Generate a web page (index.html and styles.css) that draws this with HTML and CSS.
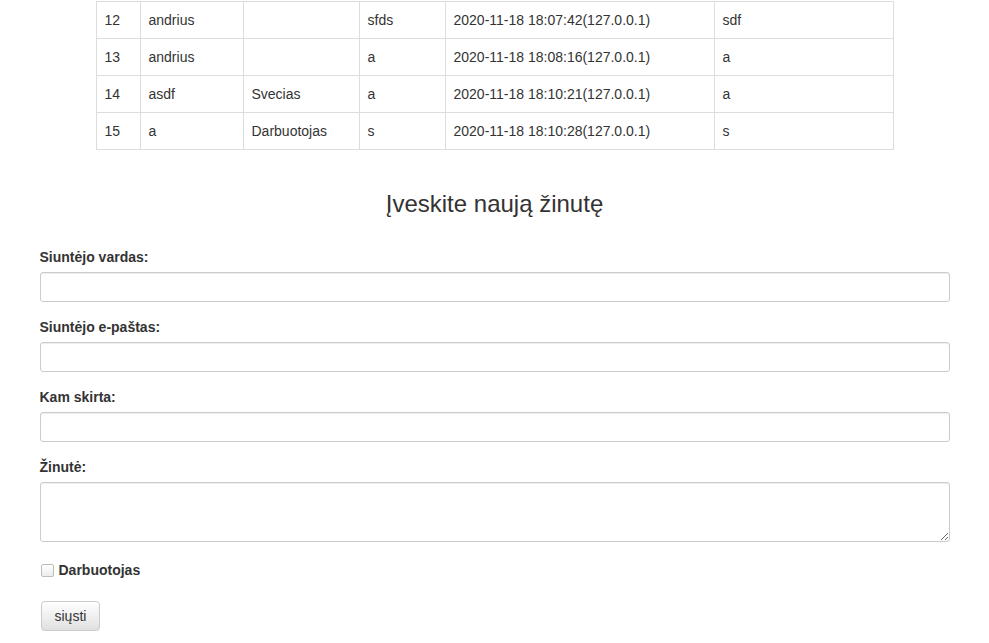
FILE: index.html
```html
<!DOCTYPE html>
<html lang="lt">
<head>
<meta charset="utf-8">
<title>Žinutės</title>
<link rel="stylesheet" href="styles.css">
</head>
<body>
<div class="table-wrap">
  <table class="msg-table">
    <colgroup>
      <col class="c1"><col class="c2"><col class="c3"><col class="c4"><col class="c5"><col class="c6">
    </colgroup>
    <tbody>
      <tr><td>12</td><td>andrius</td><td></td><td>sfds</td><td>2020-11-18 18:07:42(127.0.0.1)</td><td>sdf</td></tr>
      <tr><td>13</td><td>andrius</td><td></td><td>a</td><td>2020-11-18 18:08:16(127.0.0.1)</td><td>a</td></tr>
      <tr><td>14</td><td>asdf</td><td>Svecias</td><td>a</td><td>2020-11-18 18:10:21(127.0.0.1)</td><td>a</td></tr>
      <tr><td>15</td><td>a</td><td>Darbuotojas</td><td>s</td><td>2020-11-18 18:10:28(127.0.0.1)</td><td>s</td></tr>
    </tbody>
  </table>
</div>

<h3 class="title">Įveskite naują žinutę</h3>

<form class="msg-form">
  <div class="form-group">
    <label class="lbl" for="vardas">Siuntėjo vardas:</label>
    <input class="control" id="vardas" type="text">
  </div>
  <div class="form-group">
    <label class="lbl" for="pastas">Siuntėjo e-paštas:</label>
    <input class="control" id="pastas" type="text">
  </div>
  <div class="form-group">
    <label class="lbl" for="kam">Kam skirta:</label>
    <input class="control" id="kam" type="text">
  </div>
  <div class="form-group">
    <label class="lbl" for="zinute">Žinutė:</label>
    <textarea class="control area" id="zinute"></textarea>
  </div>
  <div class="checkbox">
    <label class="check-lbl"><input type="checkbox" class="check"> Darbuotojas</label>
  </div>
  <button type="button" class="btn">siųsti</button>
</form>
</body>
</html>
```

FILE: styles.css
```css
* { box-sizing: border-box; }
html, body { margin: 0; padding: 0; }
body {
  font-family: "Liberation Sans", Arial, sans-serif;
  font-size: 14px;
  line-height: 20px;
  color: #333;
  background: #fff;
}
.table-wrap {
  display: flex;
  justify-content: center;
  padding: 1px 0 20px 0;
}
.msg-table {
  width: 797px;
  border-collapse: collapse;
  table-layout: fixed;
}
.msg-table .c1 { width: 44px; }
.msg-table .c2 { width: 103px; }
.msg-table .c3 { width: 116px; }
.msg-table .c4 { width: 86px; }
.msg-table .c5 { width: 269px; }
.msg-table .c6 { width: 179px; }
.msg-table td {
  border: 1px solid #ddd;
  padding: 8px;
  line-height: 20px;
  height: 37px;
  vertical-align: top;
  white-space: nowrap;
}
.title {
  margin: 21px 0 30px;
  font-size: 24px;
  font-weight: 500;
  line-height: 26.4px;
  text-align: center;
  color: #333;
}
.msg-form {
  width: 910px;
  margin: 0 auto;
}
.form-group {
  margin-bottom: 15px;
}
.lbl {
  display: block;
  font-weight: bold;
  margin-bottom: 5px;
}
.control {
  display: block;
  width: 100%;
  height: 30px;
  padding: 5px 10px;
  font-family: inherit;
  font-size: 12px;
  line-height: 18px;
  color: #555;
  background: #fff;
  border: 1px solid #ccc;
  border-radius: 3px;
  box-shadow: inset 0 1px 1px rgba(0,0,0,.075);
}
.area {
  height: 60px;
  resize: vertical;
}
.checkbox {
  margin: 18px 0 21px;
}
.check-lbl {
  display: flex;
  align-items: center;
  gap: 5px;
  font-weight: bold;
  line-height: 20px;
}
.check {
  appearance: none;
  -webkit-appearance: none;
  width: 13px;
  height: 13px;
  margin: 0 0 0 1px;
  border: 1px solid #bdbdbd;
  border-radius: 2px;
  background: linear-gradient(#fff, #ededed);
}
.btn {
  display: inline-block;
  height: 30px;
  padding: 4px 13px;
  margin-left: 1px;
  font-family: inherit;
  font-size: 14px;
  line-height: 20px;
  color: #333;
  background: linear-gradient(#fff, #e0e0e0);
  border: 1px solid #ccc;
  border-radius: 4px;
  box-shadow: inset 0 1px 0 rgba(255,255,255,.15), 0 1px 1px rgba(0,0,0,.075);
}
```
